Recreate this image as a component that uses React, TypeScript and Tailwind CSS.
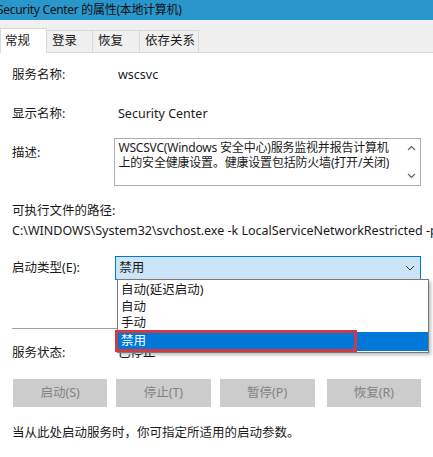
import React from "react";

const font = { fontFamily: '"Noto Sans", "Noto Sans CJK SC", sans-serif' };

function Tab({ label, active, width }: { label: string; active?: boolean; width: string }) {
  return (
    <div
      className={
        active
          ? `${width} h-[25px] bg-white border border-b-0 border-[#d9d9d9] flex items-center pl-[4px] -mb-px relative z-10`
          : `${width} h-[22px] bg-[#f0f0f0] border border-b-0 border-[#d9d9d9] flex items-center pl-[5px] -ml-px`
      }
    >
      {label}
    </div>
  );
}

export default function App() {
  const buttons = [
    { label: "启动(S)", cls: "w-[96px] ml-[1px]" },
    { label: "停止(T)", cls: "w-[96px] ml-[9px]" },
    { label: "暂停(P)", cls: "w-[97px] ml-[9px]" },
    { label: "恢复(R)", cls: "w-[96px] ml-[12px]" },
  ];

  return (
    <div
      className="w-[433px] h-[457px] overflow-hidden bg-white text-[12.5px] text-[#1a1a1a] relative"
      style={font}
    >
      {/* Title bar */}
      <div className="h-[20px] bg-[#2a97cc] flex items-center overflow-hidden">
        <span className="-ml-[3px] text-[12px] tracking-[-0.3px] leading-none text-[#111] whitespace-nowrap">
          Security Center 的属性(本地计算机)
        </span>
      </div>

      {/* Tabs */}
      <div className="h-[33px] bg-[#f0f0f0] flex items-end border-b border-[#d9d9d9]">
        <Tab label="常规" active width="w-[47px]" />
        <Tab label="登录" width="w-[47px]" />
        <Tab label="恢复" width="w-[48px]" />
        <Tab label="依存关系" width="w-[60px]" />
      </div>

      {/* Content */}
      <div className="px-[12px]">
        <div className="mt-[14px] h-[16px] flex items-center">
          <span className="w-[106px]">服务名称:</span>
          <span>wscsvc</span>
        </div>
        <div className="mt-[23px] h-[16px] flex items-center">
          <span className="w-[106px]">显示名称:</span>
          <span>Security Center</span>
        </div>
        <div className="mt-[16px] flex items-start">
          <span className="w-[105px] mt-[6px]">描述:</span>
          <div className="w-[314px] h-[48px] border border-[#abadb3] flex">
            <div className="flex-1 pl-[3px] pt-[1px] leading-[15px] text-[12px] whitespace-nowrap overflow-hidden tracking-[-0.2px]">
              <div>WSCSVC(Windows 安全中心)服务监视并报告计算机</div>
              <div>上的安全健康设置。健康设置包括防火墙(打开/关闭)</div>
            </div>
            <div className="w-[17px] flex flex-col justify-between items-center py-[6px] text-[#606060]">
              <svg width="9" height="6" viewBox="0 0 9 6">
                <path d="M1 5 L4.5 1.5 L8 5" fill="none" stroke="currentColor" strokeWidth="1.1" />
              </svg>
              <svg width="9" height="6" viewBox="0 0 9 6">
                <path d="M1 1 L4.5 4.5 L8 1" fill="none" stroke="currentColor" strokeWidth="1.1" />
              </svg>
            </div>
          </div>
        </div>
        <div className="mt-[17px] h-[16px] flex items-center">可执行文件的路径:</div>
        <div className="mt-[4px] h-[16px] flex items-center whitespace-nowrap">
          C:\WINDOWS\System32\svchost.exe -k LocalServiceNetworkRestricted -p
        </div>
        <div className="mt-[17px] flex items-center">
          <span className="w-[105px]">启动类型(E):</span>
          <div className="w-[311px] h-[24px] bg-[#cce4f7] border border-[#0078d7] flex items-center justify-between pl-[3px] pr-[5px]">
            <span>禁用</span>
            <svg width="10" height="6" viewBox="0 0 10 6" className="text-[#404040]">
              <path d="M1 1 L5 5 L9 1" fill="none" stroke="currentColor" strokeWidth="1" />
            </svg>
          </div>
        </div>
        <div className="mt-[48px] h-px bg-[#a0a0a0]" />
        <div className="mt-[16px] h-[16px] flex items-center">
          <span className="w-[106px]">服务状态:</span>
          <span>已停止</span>
        </div>
        <div className="mt-[18px] flex">
          {buttons.map((b) => (
            <div
              key={b.label}
              className={`${b.cls} h-[28px] bg-[#cccccc] text-[#838383] flex items-center justify-center`}
            >
              {b.label}
            </div>
          ))}
        </div>
        <div className="mt-[18px] h-[16px] flex items-center">当从此处启动服务时，你可指定所适用的启动参数。</div>
      </div>

      {/* Dropdown list overlay */}
      <div className="absolute left-[117px] top-[279px] w-[312px] bg-white border border-[#7a7a7a] shadow-[2px_2px_3px_rgba(0,0,0,0.25)] pt-[2px] pb-[1px]">
        <div className="h-[17px] flex items-center pl-[3px]">自动(延迟启动)</div>
        <div className="h-[16px] flex items-center pl-[3px]">自动</div>
        <div className="h-[17px] flex items-center pl-[3px]">手动</div>
        <div className="h-[19px] flex items-center pl-[3px] bg-[#0078d7] text-white">禁用</div>
      </div>

      {/* Red highlight box */}
      <div className="absolute left-[115px] top-[330px] w-[242px] h-[22px] border-[3px] border-[#cf3a45]" />
    </div>
  );
}
